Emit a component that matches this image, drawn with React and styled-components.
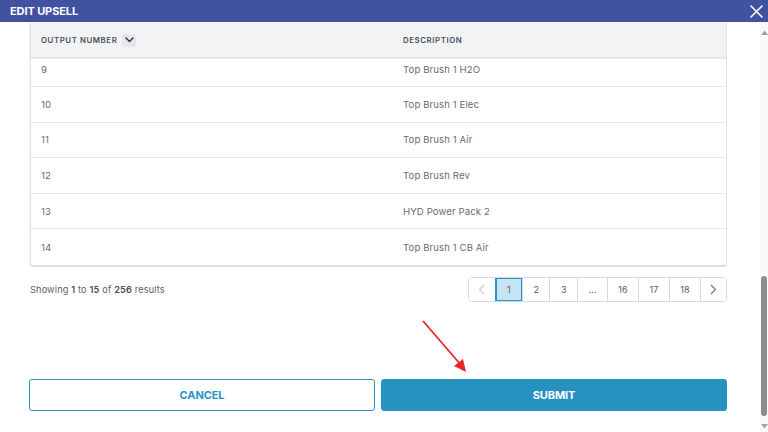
import styled, { createGlobalStyle } from "styled-components";

const GlobalStyle = createGlobalStyle`
  html, body {
    margin: 0;
    padding: 0;
    background: #ffffff;
  }
  * {
    box-sizing: border-box;
  }
`;

const rows = [
  { num: 9, desc: "Top Brush 1 H2O", clipped: true },
  { num: 10, desc: "Top Brush 1 Elec" },
  { num: 11, desc: "Top Brush 1 Air" },
  { num: 12, desc: "Top Brush Rev" },
  { num: 13, desc: "HYD Power Pack 2" },
  { num: 14, desc: "Top Brush 1 CB Air" },
];

const pages = ["1", "2", "3", "...", "16", "17", "18"];

export default function App() {
  return (
    <Modal>
      <GlobalStyle />
      <Header>
        <Title>EDIT UPSELL</Title>
        <CloseButton aria-label="close">
          <svg width="13" height="13" viewBox="0 0 13 13">
            <path d="M1 1 L12 12 M12 1 L1 12" stroke="#fff" strokeWidth="1.6" strokeLinecap="round" />
          </svg>
        </CloseButton>
      </Header>
      <Body>
        <Content>
          <TableCard>
            <HeadRow>
              <HeadCell>
                OUTPUT NUMBER
                <SortBox>
                  <svg width="9" height="6" viewBox="0 0 9 6">
                    <path d="M1 1 L4.5 4.5 L8 1" fill="none" stroke="#2b2f3a" strokeWidth="1.4" strokeLinecap="round" strokeLinejoin="round" />
                  </svg>
                </SortBox>
              </HeadCell>
              <HeadCell>DESCRIPTION</HeadCell>
            </HeadRow>
            {rows.map((r) => (
              <Row key={r.num} $clipped={r.clipped}>
                <Cell>{r.num}</Cell>
                <Cell>{r.desc}</Cell>
              </Row>
            ))}
          </TableCard>

          <FooterBar>
            <Summary>
              Showing <b>1</b> to <b>15</b> of <b>256</b> results
            </Summary>
            <Pager>
              <PageItem $arrow>
                <svg width="7" height="11" viewBox="0 0 7 11">
                  <path d="M6 1 L1.5 5.5 L6 10" fill="none" stroke="#c3c7d0" strokeWidth="1.1" />
                </svg>
              </PageItem>
              {pages.map((p, i) => (
                <PageItem key={p} $active={i === 0}>
                  {p}
                </PageItem>
              ))}
              <PageItem $arrow>
                <svg width="7" height="11" viewBox="0 0 7 11">
                  <path d="M1 1 L5.5 5.5 L1 10" fill="none" stroke="#6b7080" strokeWidth="1.1" />
                </svg>
              </PageItem>
            </Pager>
          </FooterBar>

          <Actions>
            <CancelButton>CANCEL</CancelButton>
            <SubmitButton>SUBMIT</SubmitButton>
            <Arrow width="50" height="58" viewBox="0 0 50 58">
              <line x1="2" y1="2" x2="40" y2="46" stroke="#e8262a" strokeWidth="1.8" />
              <path d="M45 53 L33 47 L42 40 Z" fill="#e8262a" />
            </Arrow>
          </Actions>
        </Content>

        <Rail>
          <RailArrow>
            <svg width="7" height="5" viewBox="0 0 7 5">
              <path d="M0 5 L3.5 0.5 L7 5 Z" fill="#a3a3a3" />
            </svg>
          </RailArrow>
          <Thumb />
          <RailArrow>
            <svg width="7" height="5" viewBox="0 0 7 5">
              <path d="M0 0 L3.5 4.5 L7 0 Z" fill="#a3a3a3" />
            </svg>
          </RailArrow>
        </Rail>
      </Body>
    </Modal>
  );
}

const Modal = styled.div`
  width: 768px;
  height: 432px;
  display: flex;
  flex-direction: column;
  background: #fff;
  font-family: "Inter", "Open Sans", sans-serif;
  overflow: hidden;
`;

const Header = styled.div`
  height: 22px;
  flex-shrink: 0;
  background: #4153a0;
  display: flex;
  align-items: center;
  justify-content: space-between;
  padding: 0 4px 0 10px;
`;

const Title = styled.div`
  color: #fff;
  font-size: 11px;
  font-weight: 700;
  letter-spacing: -0.1px;
`;

const CloseButton = styled.button`
  border: none;
  background: transparent;
  padding: 0;
  width: 16px;
  height: 16px;
  display: flex;
  align-items: center;
  justify-content: center;
`;

const Body = styled.div`
  flex: 1;
  display: flex;
  min-height: 0;
`;

const Content = styled.div`
  flex: 1;
  padding: 1px 33px 0 30px;
  display: flex;
  flex-direction: column;
`;

const TableCard = styled.div`
  background: #fff;
  border-left: 1px solid #e2e3e6;
  border-right: 1px solid #e2e3e6;
  border-bottom: 2px solid #dcdde0;
  border-radius: 0 0 4px 4px;
  box-shadow: -1px 0 1px rgba(0, 0, 0, 0.05);
`;

const HeadRow = styled.div`
  height: 36px;
  display: grid;
  grid-template-columns: 362px 1fr;
  align-items: center;
  background: #f2f3f5;
  border-bottom: 2px solid #e6e7ea;
  padding-left: 10px;
`;

const HeadCell = styled.div`
  display: flex;
  align-items: center;
  gap: 5px;
  font-size: 7.8px;
  font-weight: 600;
  letter-spacing: 0.6px;
  color: #4a4f5c;
`;

const SortBox = styled.span`
  width: 14px;
  height: 13px;
  border-radius: 3px;
  background: #e4e6ea;
  display: flex;
  align-items: center;
  justify-content: center;
`;

const Row = styled.div`
  height: ${(p) => (p.$clipped ? "28px" : "35.6px")};
  display: grid;
  grid-template-columns: 362px 1fr;
  align-items: ${(p) => (p.$clipped ? "flex-start" : "center")};
  padding-top: ${(p) => (p.$clipped ? "5px" : "0")};
  padding-left: 10px;
  border-bottom: 1px solid #e6e7ea;
  &:last-child {
    border-bottom: none;
  }
`;

const Cell = styled.div`
  font-size: 9.6px;
  color: #6a6d75;
  letter-spacing: 0.1px;
`;

const FooterBar = styled.div`
  margin-top: 10px;
  display: flex;
  align-items: center;
  justify-content: space-between;
`;

const Summary = styled.div`
  font-size: 9.2px;
  color: #5d616b;
  letter-spacing: 0.15px;
  b {
    font-weight: 600;
    color: #4a4e58;
  }
`;

const Pager = styled.div`
  display: flex;
  height: 25px;
  border: 1px solid #d6d9df;
  border-radius: 4px;
  overflow: hidden;
`;

const PageItem = styled.div`
  min-width: ${(p) => (p.$arrow ? "26px" : "27px")};
  padding: 0 ${(p) => (p.$arrow ? "0" : "10.5px")};
  display: flex;
  align-items: center;
  justify-content: center;
  font-size: 9px;
  color: #555a66;
  background: ${(p) => (p.$active ? "#c6e3f3" : "#fff")};
  border-left: 1px solid ${(p) => (p.$active ? "#2a93c6" : "#d6d9df")};
  box-shadow: ${(p) => (p.$active ? "inset 0 0 0 1px #2a93c6" : "none")};
  &:first-child {
    border-left: none;
  }
`;

const Actions = styled.div`
  margin-top: 77px;
  display: grid;
  grid-template-columns: 1fr 1fr;
  gap: 6px;
  position: relative;
  margin-left: -1px;
`;

const BaseButton = styled.button`
  height: 32px;
  border-radius: 3px;
  font-family: "Inter", "Open Sans", sans-serif;
  font-size: 11px;
  font-weight: 700;
  letter-spacing: -0.1px;
  cursor: pointer;
`;

const CancelButton = styled(BaseButton)`
  background: #fff;
  border: 1px solid #2a93c6;
  color: #2a93c6;
`;

const SubmitButton = styled(BaseButton)`
  background: #2692c0;
  border: 1px solid #2692c0;
  color: #fff;
`;

const Arrow = styled.svg`
  position: absolute;
  left: 392px;
  top: -60px;
  pointer-events: none;
`;

const Rail = styled.div`
  width: 8px;
  background: #fafafa;
  display: flex;
  flex-direction: column;
  align-items: center;
  padding: 6px 0 2px;
`;

const RailArrow = styled.div`
  height: 8px;
  display: flex;
  align-items: center;
  justify-content: center;
`;

const Thumb = styled.div`
  margin-top: auto;
  margin-bottom: 6px;
  width: 6px;
  height: 140px;
  border-radius: 3px;
  background: #8d8d8d;
`;
